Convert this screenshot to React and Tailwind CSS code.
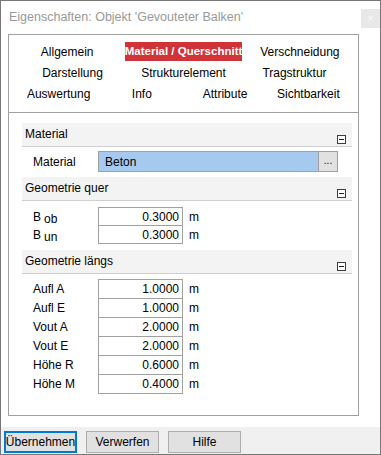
const tabs1 = ["Allgemein", "Material / Querschnitt", "Verschneidung"];
const tabs2 = ["Darstellung", "Strukturelement", "Tragstruktur"];
const tabs3 = ["Auswertung", "Info", "Attribute", "Sichtbarkeit"];

const laengs = [
  ["Aufl A", "1.0000"],
  ["Aufl E", "1.0000"],
  ["Vout A", "2.0000"],
  ["Vout E", "2.0000"],
  ["Höhe R", "0.6000"],
  ["Höhe M", "0.4000"],
];

const Collapse = () => (
  <div className="w-[9px] h-[9px] border border-[#3c3c3c] bg-white flex items-center justify-center">
    <div className="w-[5px] h-px bg-[#1e1e1e]" />
  </div>
);

const Header = ({ title }) => (
  <div className="h-[24px] bg-[#f3f3f3] border-b border-[#cfcfcf] flex pl-[3px] pr-[6px]">
    <span className="mt-[5px] flex-1">{title}</span>
    <div className="mt-[12px]">
      <Collapse />
    </div>
  </div>
);

const ValueRow = ({ label, value, h, first }) => (
  <div className={`flex ${first ? "" : "-mt-px"}`}>
    <div className="w-[76px] pl-[11px] flex items-center">{label}</div>
    <div
      className={`w-[85px] border border-[#a0a0a0] bg-white text-right pr-[3px] flex items-center justify-end ${h}`}
    >
      {value}
    </div>
    <div className="pl-[6px] flex items-center">m</div>
  </div>
);

const App = () => {
  return (
    <div className="w-[381px] h-[455px] bg-white border border-[#777777] relative flex flex-col font-['Liberation_Sans',Arial,sans-serif] text-[12px] text-black leading-none">
      <div className="h-[33px] pl-[8px] pt-[10px] text-[#999999] text-[12.5px]">
        Eigenschaften: Objekt 'Gevouteter Balken'
      </div>
      <div className="absolute top-[8px] right-0 w-[19px] h-[19px] bg-[#e8e8e8] text-[#fafafa] flex items-center justify-center text-[11px]">
        ×
      </div>

      <div className="ml-[7px] w-[351px] h-[382px] border border-[#a0a0a0] flex flex-col">
        <div className="h-[78px] border-b border-[#a0a0a0] pt-[6px]">
          <div className="grid grid-cols-3 h-[21px]">
            {tabs1.map((t) => (
              <div key={t} className="flex items-center justify-center">
                {t === "Material / Querschnitt" ? (
                  <span className="bg-[#d13438] text-white font-bold text-[11.5px] h-[19px] w-[136px] whitespace-nowrap flex items-center justify-center">
                    {t}
                  </span>
                ) : (
                  <span className="whitespace-nowrap">{t}</span>
                )}
              </div>
            ))}
          </div>
          <div className="grid grid-cols-3 h-[21px] px-[8px]">
            {tabs2.map((t) => (
              <div key={t} className="flex items-center justify-center">
                {t}
              </div>
            ))}
          </div>
          <div className="grid grid-cols-4 h-[21px] px-[8px]">
            {tabs3.map((t) => (
              <div key={t} className="flex items-center justify-center">
                {t}
              </div>
            ))}
          </div>
        </div>

        <div className="ml-[13px] mr-[6px] mt-[10px] flex flex-col">
          <Header title="Material" />
          <div className="flex mt-[4px] h-[21px]">
            <div className="w-[76px] pl-[11px] flex items-center">Material</div>
            <div className="w-[221px] bg-[#a6c9f0] border border-[#a0a0a0] flex items-center pl-[6px]">
              Beton
            </div>
            <div className="w-[19px] bg-[#e1e1e1] border border-l-0 border-[#a0a0a0] flex items-center justify-center text-[10px] pb-[1px]">
              ...
            </div>
          </div>

          <div className="mt-[5px]">
            <Header title="Geometrie quer" />
          </div>
          <div className="mt-[6px]">
            <ValueRow
              first
              h="h-[19px]"
              value="0.3000"
              label={
                <span>
                  B<span className="relative top-[2px] ml-[3px]">ob</span>
                </span>
              }
            />
            <ValueRow
              h="h-[19px]"
              value="0.3000"
              label={
                <span>
                  B<span className="relative top-[2px] ml-[3px]">un</span>
                </span>
              }
            />
          </div>

          <div className="mt-[6px]">
            <Header title="Geometrie längs" />
          </div>
          <div className="mt-[5px]">
            {laengs.map(([l, v], i) => (
              <ValueRow key={l} first={i === 0} h="h-[20px]" label={l} value={v} />
            ))}
          </div>
        </div>
      </div>

      <div className="mt-[11px] flex-1 bg-[#f0f0f0] flex items-start gap-[8px] pl-[3px] pt-[4px]">
        <button className="w-[73px] h-[22px] bg-[#e1e1e1] border-2 border-[#0078d7] flex items-center justify-center">
          Übernehmen
        </button>
        <button className="ml-px w-[73px] h-[22px] bg-[#e1e1e1] border border-[#adadad] flex items-center justify-center">
          Verwerfen
        </button>
        <button className="ml-px w-[73px] h-[22px] bg-[#e1e1e1] border border-[#adadad] flex items-center justify-center">
          Hilfe
        </button>
      </div>
    </div>
  );
};

export default App;
